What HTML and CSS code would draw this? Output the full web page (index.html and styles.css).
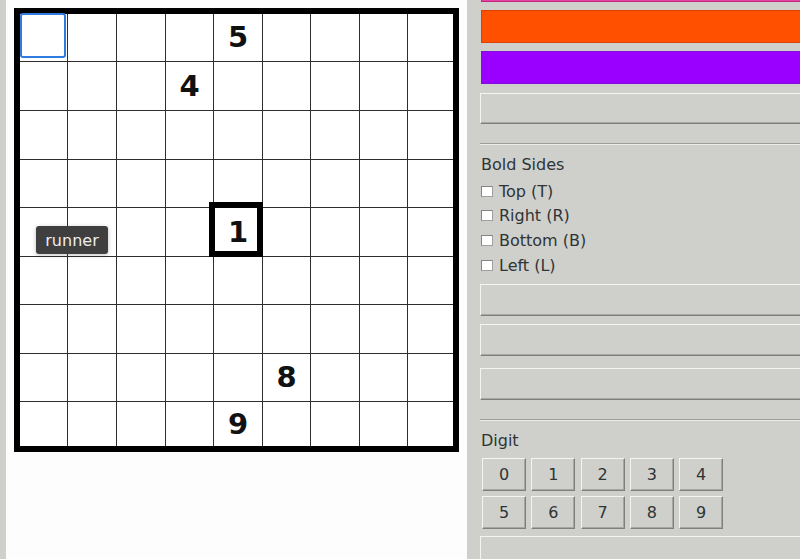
FILE: index.html
```html
<!DOCTYPE html>
<html>
<head>
<meta charset="utf-8">
<link rel="stylesheet" href="styles.css">
</head>
<body>
<div class="app">
  <div class="strip"></div>
  <div class="canvas">
    <div class="board">
      <div class="cell selected"></div><div class="cell"></div><div class="cell"></div><div class="cell"></div><div class="cell">5</div><div class="cell"></div><div class="cell"></div><div class="cell"></div><div class="cell"></div>
      <div class="cell"></div><div class="cell"></div><div class="cell"></div><div class="cell">4</div><div class="cell"></div><div class="cell"></div><div class="cell"></div><div class="cell"></div><div class="cell"></div>
      <div class="cell"></div><div class="cell"></div><div class="cell"></div><div class="cell"></div><div class="cell"></div><div class="cell"></div><div class="cell"></div><div class="cell"></div><div class="cell"></div>
      <div class="cell"></div><div class="cell"></div><div class="cell"></div><div class="cell"></div><div class="cell"></div><div class="cell"></div><div class="cell"></div><div class="cell"></div><div class="cell"></div>
      <div class="cell"></div><div class="cell"></div><div class="cell"></div><div class="cell"></div><div class="cell bold">1</div><div class="cell"></div><div class="cell"></div><div class="cell"></div><div class="cell"></div>
      <div class="cell"></div><div class="cell"></div><div class="cell"></div><div class="cell"></div><div class="cell"></div><div class="cell"></div><div class="cell"></div><div class="cell"></div><div class="cell"></div>
      <div class="cell"></div><div class="cell"></div><div class="cell"></div><div class="cell"></div><div class="cell"></div><div class="cell"></div><div class="cell"></div><div class="cell"></div><div class="cell"></div>
      <div class="cell"></div><div class="cell"></div><div class="cell"></div><div class="cell"></div><div class="cell"></div><div class="cell">8</div><div class="cell"></div><div class="cell"></div><div class="cell"></div>
      <div class="cell"></div><div class="cell"></div><div class="cell"></div><div class="cell"></div><div class="cell">9</div><div class="cell"></div><div class="cell"></div><div class="cell"></div><div class="cell"></div>
    </div>
    <div class="tooltip">runner</div>
  </div>
  <div class="panel">
    <div class="panel-inner">
      <div class="swatch pink"></div>
      <div class="swatch orange"></div>
      <div class="swatch purple"></div>
      <div class="btn btn-first"></div>
      <div class="sep sep-1"></div>
      <div class="label">Bold Sides</div>
      <div class="checks">
        <label class="check"><span class="box"></span>Top (T)</label>
        <label class="check"><span class="box"></span>Right (R)</label>
        <label class="check"><span class="box"></span>Bottom (B)</label>
        <label class="check"><span class="box"></span>Left (L)</label>
      </div>
      <div class="btn btn-a"></div>
      <div class="btn btn-b"></div>
      <div class="btn btn-c"></div>
      <div class="sep sep-2"></div>
      <div class="label">Digit</div>
      <div class="digits">
        <div class="dbtn">0</div><div class="dbtn">1</div><div class="dbtn">2</div><div class="dbtn">3</div><div class="dbtn">4</div>
        <div class="dbtn">5</div><div class="dbtn">6</div><div class="dbtn">7</div><div class="dbtn">8</div><div class="dbtn">9</div>
      </div>
      <div class="btn btn-last"></div>
    </div>
  </div>
</div>
</body>
</html>
```
FILE: styles.css
```css
html, body {
  margin: 0;
  padding: 0;
  background: #cfd0cc;
}
.app {
  display: flex;
  width: 800px;
  height: 559px;
  overflow: hidden;
  font-family: "DejaVu Sans", sans-serif;
}
.strip {
  width: 6px;
  flex: none;
  background: #cfd0cc;
}
.canvas {
  position: relative;
  width: 461px;
  flex: none;
  background: #fdfdfd;
  padding: 8px 0 0 8px;
  box-sizing: border-box;
}
.board {
  display: grid;
  grid-template-columns: 47px 48px 48px 47px 48px 47px 48px 47px 45px;
  grid-template-rows: 47px 48px 48px 47px 48px 47px 48px 47px 44px;
  gap: 1px;
  background: #2e2e2e;
  border: 6px solid #000;
  width: max-content;
}
.cell {
  position: relative;
  background: #fff;
  display: flex;
  align-items: center;
  justify-content: center;
  font-weight: bold;
  font-size: 29px;
  color: #111;
  line-height: 1;
}
.cell.selected::after {
  content: "";
  position: absolute;
  left: 0;
  top: -1px;
  width: 46px;
  height: 45px;
  box-sizing: border-box;
  border: 2px solid #2f7be0;
  border-radius: 3px;
}
.cell.bold::after {
  content: "";
  position: absolute;
  left: -5px;
  top: -6px;
  right: -1px;
  bottom: -1px;
  border: 6px solid #000;
  z-index: 2;
}
.tooltip {
  position: absolute;
  left: 30px;
  top: 226px;
  width: 72px;
  height: 28px;
  box-sizing: border-box;
  background: #3f3f3f;
  color: #eeeeee;
  font-size: 16px;
  display: flex;
  align-items: center;
  justify-content: center;
  border-radius: 3px;
  box-shadow: 0 1px 4px rgba(0,0,0,0.25);
}
.panel {
  width: 333px;
  flex: none;
  background: #cfd0cc;
  overflow: hidden;
}
.panel-inner {
  margin-top: -31px;
  padding-left: 13px;
  width: 350px;
  display: flex;
  flex-direction: column;
  color: #2e3436;
}
.swatch {
  height: 33px;
  margin-left: 1px;
  box-sizing: border-box;
  border: 1px solid;
  margin-bottom: 8px;
}
.pink { background: #e8409e; border-color: #c02a80; }
.orange { background: #ff5000; border-color: #d94200; }
.purple { background: #9900ff; border-color: #8010d8; margin-bottom: 9px; }
.btn {
  height: 32px;
  box-sizing: border-box;
  background: #cfd0cc;
  border-top: 1px solid #f4f4f2;
  border-left: 1px solid #f4f4f2;
  border-bottom: 1px solid #7f7f7d;
  box-shadow: inset 0 -1px 0 #a6a6a4;
}
.btn-first { height: 31px; }
.sep {
  height: 1px;
  background: #9c9c9a;
  border-bottom: 1px solid #ececea;
}
.sep-1 { margin-top: 19px; }
.label {
  margin-top: 10px;
  font-size: 16px;
  line-height: 19px;
  margin-left: 1px;
}
.checks {
  margin-top: 5px;
  display: flex;
  flex-direction: column;
  margin-left: 1px;
}
.check {
  height: 24.67px;
  display: flex;
  align-items: center;
  font-size: 16px;
}
.box {
  width: 12px;
  height: 11px;
  box-sizing: border-box;
  background: #fff;
  border: 1px solid #a0a0a0;
  border-top-color: #858585;
  border-left-color: #858585;
  margin-right: 6px;
}
.btn-a { margin-top: 6px; }
.btn-b { margin-top: 8px; }
.btn-c { margin-top: 12px; }
.sep-2 { margin-top: 19px; }
.digits {
  margin-top: 8px;
  margin-left: 2px;
  display: grid;
  grid-template-columns: repeat(5, 44px);
  grid-auto-rows: 33px;
  column-gap: 5.3px;
  row-gap: 5px;
}
.dbtn {
  box-sizing: border-box;
  background: #cfd0cc;
  border-top: 1px solid #f4f4f2;
  border-left: 1px solid #f4f4f2;
  border-bottom: 1px solid #7f7f7d;
  border-right: 1px solid #7f7f7d;
  box-shadow: inset 0 -1px 0 #a6a6a4, inset -1px 0 0 #a6a6a4;
  display: flex;
  align-items: center;
  justify-content: center;
  font-size: 16px;
  color: #2e3436;
}
.btn-last { margin-top: 7px; }
```
